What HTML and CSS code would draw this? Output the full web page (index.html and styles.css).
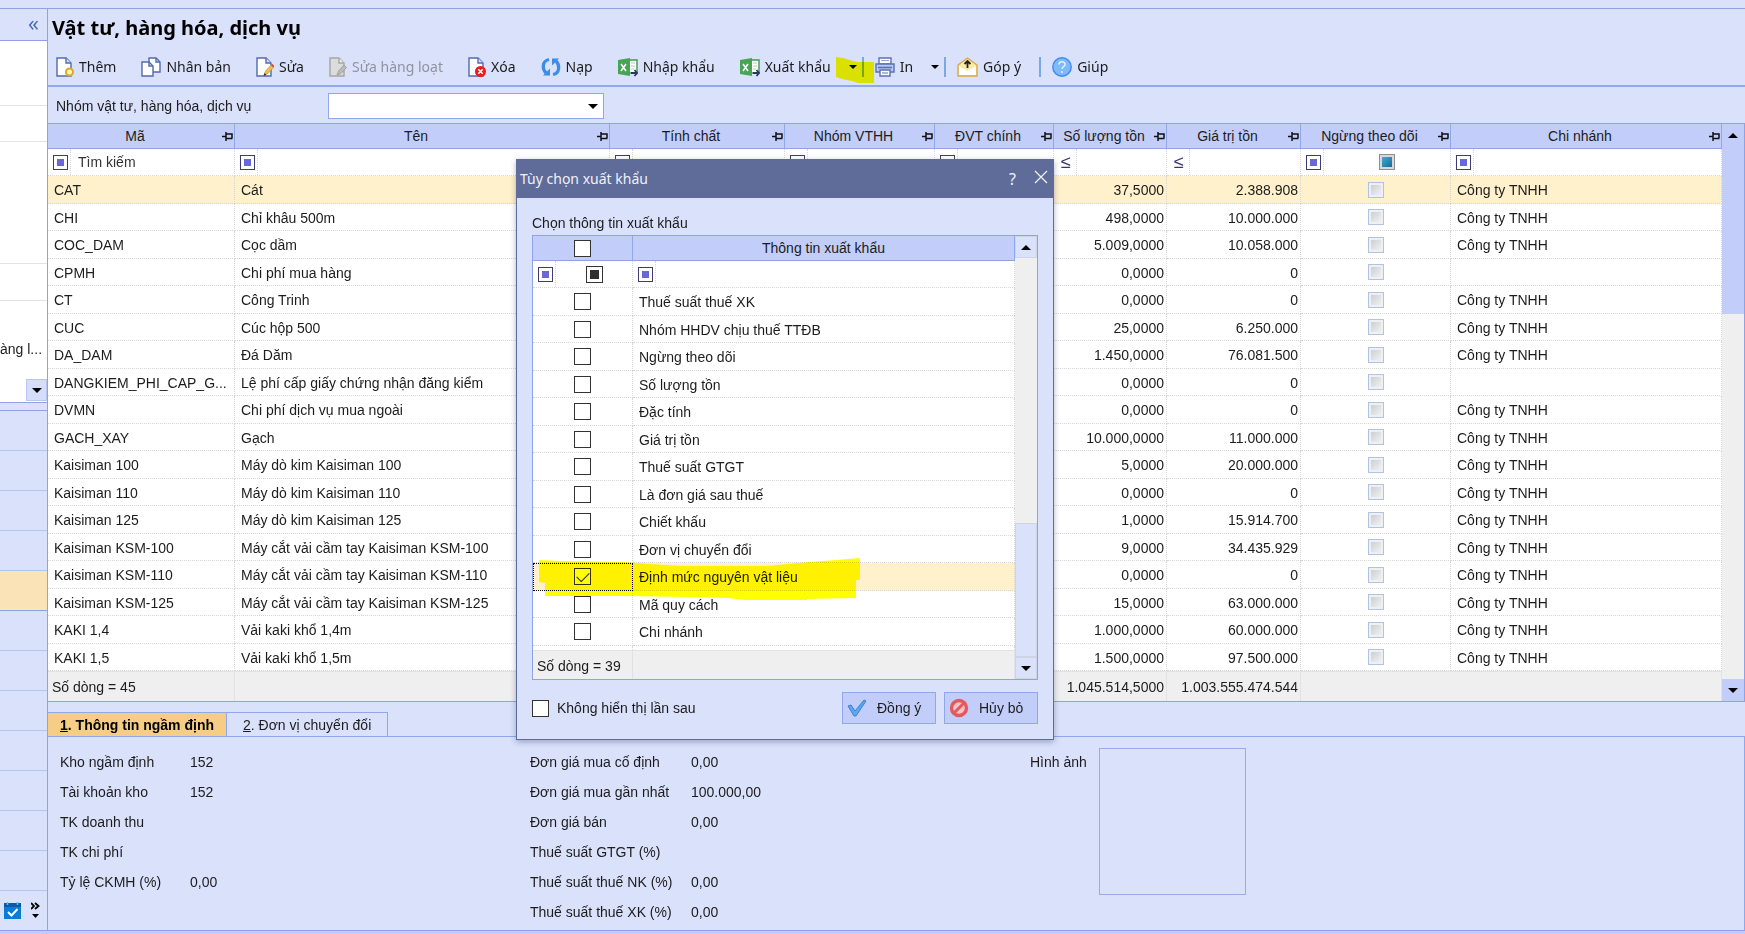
FILE: index.html
```html
<!DOCTYPE html>
<html lang="vi">
<head>
  <meta charset="UTF-8" />
  <meta name="viewport" content="width=device-width, initial-scale=1.0"/>
  <title>Vật tư, hàng hóa, dịch vụ</title>
  <link rel="stylesheet" href="styles.css">
</head>
<body>

  <!-- shared icon shapes -->
  <svg class="defs" width="0" height="0" aria-hidden="true">
    <symbol id="page" viewBox="0 0 18 20"><path d="M1 1h9l5 5v13H1z" fill="#fff" stroke="#5269ae" stroke-width="1.4"/><path d="M10 1v5h5" fill="#d9e0fa" stroke="#5269ae" stroke-width="1.4"/></symbol>
    <symbol id="excel" viewBox="0 0 20 20"><path d="M11 3h8v13h-8z" fill="#fff" stroke="#3f9a4e" stroke-width="1.4"/><path d="M13 6h4M13 9h4M13 12h3" stroke="#a9d3b0"/><path d="M0 3l12-2v18L0 17z" fill="#46a455"/><path d="M3 7l5 7M8 7l-5 7" stroke="#fff" stroke-width="1.6"/><path d="M13 16h6M16.500 13l2.500 3-2.500 3" fill="none" stroke="#28395e" stroke-width="1.8"/></symbol>
    <symbol id="pin" viewBox="0 0 11 9"><path d="M0 4.500h4M4 0v9M4 2h6v4M4 6.500h6.500" fill="none" stroke="#111" stroke-width="1.500"/></symbol>
  </svg>

  <div class="app">
    <aside class="sidebar">
      <div class="side-head"><button class="collapse" aria-label="Thu gọn">«</button></div>
      <div class="side-tree">
        <div class="tree-row first"></div>
        <div class="tree-row second"></div>
        <div class="tree-row third"></div>
        <div class="tree-row fourth"></div>
        <div class="tree-label">àng l...</div>
        <button class="side-down" aria-label="Xuống"><i class="down"></i></button>
      </div>
      <div class="side-split"></div>
      <div class="side-nav">
        <div class="nav-item"></div>
        <div class="nav-item"></div>
        <div class="nav-item"></div>
        <div class="nav-item"></div>
        <div class="nav-item active"></div>
        <div class="nav-item"></div>
        <div class="nav-item"></div>
        <div class="nav-item"></div>
        <div class="nav-item"></div>
        <div class="nav-item"></div>
        <div class="nav-item"></div>
        <div class="nav-item"></div>
      </div>
      <div class="side-foot">
        <svg width="17" height="17" viewBox="0 0 17 17"><path d="M0 1h17v16H0z" fill="#0a7bd6"/><path d="M0 1h17v4H0z" fill="#0b5aa6"/><path d="M3.500 0v3M13.500 0v3" stroke="#53c6f5" stroke-width="1.500"/><path d="M4 10l3.500 3.500L13.500 7" fill="none" stroke="#fff" stroke-width="2"/></svg>
        <svg width="9" height="17" viewBox="0 0 9 17"><path d="M0 1l3 3-3 3M4 1l3.500 3L4 7" fill="none" stroke="#000" stroke-width="1.800"/><path d="M1 12h7l-3.500 4z"/></svg>
      </div>
    </aside>

    <main class="content">
      <h1>Vật tư, hàng hóa, dịch vụ</h1>

      <div class="toolbar">
        <button><svg width="18" height="20" viewBox="0 0 18 20"><use href="#page" width="18" height="20"/><circle cx="13.500" cy="15" r="3.500" fill="#fff3b5" stroke="#d9a92c" stroke-width="2"/></svg>Thêm</button>
        <button><svg width="20" height="20" viewBox="0 0 20 20"><path d="M8 1h7l4 4v10H8z" fill="#fff" stroke="#5269ae" stroke-width="1.400"/><path d="M15 1v4h4" fill="none" stroke="#5269ae" stroke-width="1.400"/><path d="M1 5h7l4 4v10H1z" fill="#fff" stroke="#5269ae" stroke-width="1.400"/><path d="M8 5v4h4" fill="none" stroke="#5269ae" stroke-width="1.400"/></svg>Nhân bản</button>
        <button><svg width="18" height="20" viewBox="0 0 18 20"><use href="#page" width="18" height="20"/><path d="M8 18l1.500-4 5.500-6 2.500 2.500-5.500 6z" fill="#e9bd52" stroke="#b78a2c" stroke-width=".6"/><path d="M15 8l1.500-1 2 2-1 1.500z" fill="#d8443a"/><path d="M7.500 19l1-3 2 2z" fill="#333"/></svg>Sửa</button>
        <button disabled><svg width="18" height="20" viewBox="0 0 18 20"><path d="M1 1h9l5 5v13H1z" fill="#dcdcdc" stroke="#a5a5a5" stroke-width="1.400"/><path d="M10 1v5h5" fill="#eee" stroke="#a5a5a5" stroke-width="1.400"/><path d="M8 18l1.500-4 5.500-6 2.500 2.500-5.500 6z" fill="#bbb" stroke="#999" stroke-width=".8"/></svg>Sửa hàng loạt</button>
        <button><svg width="18" height="20" viewBox="0 0 18 20"><use href="#page" width="18" height="20"/><circle cx="12.500" cy="14.500" r="5.500" fill="#f01818"/><path d="M10.300 12.300l4.400 4.400M14.700 12.300l-4.400 4.400" stroke="#fff" stroke-width="1.600"/></svg>Xóa</button>
        <button><svg width="20" height="20" viewBox="0 0 20 20"><path d="M8 2.500C1 4 1 12 5 16" fill="none" stroke="#3c8ce8" stroke-width="3.200"/><path d="M2 18.500h7v-7z" fill="#3c8ce8"/><path d="M12 17.500c7-1.500 7-9.500 3-13.500" fill="none" stroke="#3c8ce8" stroke-width="3.200"/><path d="M18 1.500h-7v7z" fill="#3c8ce8"/></svg>Nạp</button>
        <button><svg width="20" height="20"><use href="#excel"/></svg>Nhập khẩu</button>
        <button><svg width="20" height="20"><use href="#excel"/></svg>Xuất khẩu</button>
        <button class="split" aria-label="Tùy chọn xuất khẩu"><i class="down"></i>
          <svg class="mark" width="38" height="26" viewBox="0 0 38 26"><path d="M0 0l7 1 10 3 6 1h15v21H22l-6-2-10-2-6-2z" fill="#ff0"/></svg>
        </button>
        <button class="print"><svg width="20" height="20" viewBox="0 0 20 20"><path d="M4 1h12v6H4z" fill="#fff" stroke="#5872b4" stroke-width="1.400"/><path d="M6 3.500h8" stroke="#93a6d4"/><path d="M1 7h18v8H1z" fill="#b9c8ef" stroke="#5872b4" stroke-width="1.400"/><path d="M3 10.500h14" stroke="#5872b4" stroke-width="1.600"/><path d="M5 13h10v6H5z" fill="#fff" stroke="#5872b4" stroke-width="1.400"/><path d="M7 16h6" stroke="#5872b4"/></svg>In</button>
        <button class="split" aria-label="Tùy chọn in"><i class="down"></i></button>
        <button class="feedback"><svg width="21" height="20" viewBox="0 0 21 20"><path d="M1 8l9.500-7L20 8v11H1z" fill="#fbe9a8" stroke="#d8a849" stroke-width="1.400"/><path d="M2 9l8.500 5L19 9v9H2z" fill="#fff"/><path d="M10.500 11V5M7.500 7l3-3 3 3" fill="none" stroke="#222" stroke-width="1.800"/></svg>Góp ý</button>
        <span class="bar"></span>
        <button class="help"><svg width="20" height="20" viewBox="0 0 20 20"><circle cx="10" cy="10" r="9.200" fill="#7db9fb" stroke="#3d8cec" stroke-width="1.400"/><path d="M7 7.500c0-4 6-3.500 6 0 0 2.200-3 2.200-3 4.500M10 14v2" fill="none" stroke="#e3f1ff" stroke-width="1.500"/></svg>Giúp</button>
      </div>

      <div class="group-row">
        <label for="group">Nhóm vật tư, hàng hóa, dịch vụ</label>
        <div class="combo"><select id="group"><option></option></select><i class="down"></i></div>
      </div>

      <div class="grid">
        <table class="items">
          <colgroup>
            <col class="c-code"><col class="c-name"><col class="c-kind"><col class="c-group"><col class="c-unit"><col class="c-qty"><col class="c-value"><col class="c-stop"><col>
          </colgroup>
          <thead>
            <tr>
              <th>Mã<svg class="pin"><use href="#pin"/></svg></th>
              <th>Tên<svg class="pin"><use href="#pin"/></svg></th>
              <th>Tính chất<svg class="pin"><use href="#pin"/></svg></th>
              <th>Nhóm VTHH<svg class="pin"><use href="#pin"/></svg></th>
              <th>ĐVT chính<svg class="pin"><use href="#pin"/></svg></th>
              <th>Số lượng tồn<svg class="pin"><use href="#pin"/></svg></th>
              <th>Giá trị tồn<svg class="pin"><use href="#pin"/></svg></th>
              <th>Ngừng theo dõi<svg class="pin"><use href="#pin"/></svg></th>
              <th>Chi nhánh<svg class="pin"><use href="#pin"/></svg></th>
            </tr>
            <tr class="filter">
              <td><div><span class="op"><i></i></span><input type="text" aria-label="Tìm theo mã" placeholder="Tìm kiếm"></div></td>
              <td><div><span class="op"><i></i></span><input type="text" aria-label="Tìm theo tên"></div></td>
              <td><div><span class="op"><i></i></span></div></td>
              <td><div><span class="op"><i></i></span></div></td>
              <td><div><span class="op"><i></i></span></div></td>
              <td><div><span class="op le">≤</span><input type="text" aria-label="Số lượng tồn"></div></td>
              <td><div><span class="op le">≤</span><input type="text" aria-label="Giá trị tồn"></div></td>
              <td><div><span class="op"><i></i></span><span class="mid"><input type="checkbox" class="old mixed" aria-label="Ngừng theo dõi"></span></div></td>
              <td><div><span class="op"><i></i></span><input type="text" aria-label="Chi nhánh"></div></td>
            </tr>
          </thead>
          <tbody>
            <tr class="selected"><td>CAT</td><td>Cát</td><td></td><td></td><td></td><td>37,5000</td><td>2.388.908</td><td><input type="checkbox" class="old" aria-label="Ngừng CAT"></td><td>Công ty TNHH</td></tr>
            <tr><td>CHI</td><td>Chỉ khâu 500m</td><td></td><td></td><td></td><td>498,0000</td><td>10.000.000</td><td><input type="checkbox" class="old" aria-label="Ngừng CHI"></td><td>Công ty TNHH</td></tr>
            <tr><td>COC_DAM</td><td>Cọc dầm</td><td></td><td></td><td></td><td>5.009,0000</td><td>10.058.000</td><td><input type="checkbox" class="old" aria-label="Ngừng COC_DAM"></td><td>Công ty TNHH</td></tr>
            <tr><td>CPMH</td><td>Chi phí mua hàng</td><td></td><td></td><td></td><td>0,0000</td><td>0</td><td><input type="checkbox" class="old" aria-label="Ngừng CPMH"></td><td></td></tr>
            <tr><td>CT</td><td>Công Trinh</td><td></td><td></td><td></td><td>0,0000</td><td>0</td><td><input type="checkbox" class="old" aria-label="Ngừng CT"></td><td>Công ty TNHH</td></tr>
            <tr><td>CUC</td><td>Cúc hộp 500</td><td></td><td></td><td></td><td>25,0000</td><td>6.250.000</td><td><input type="checkbox" class="old" aria-label="Ngừng CUC"></td><td>Công ty TNHH</td></tr>
            <tr><td>DA_DAM</td><td>Đá Dăm</td><td></td><td></td><td></td><td>1.450,0000</td><td>76.081.500</td><td><input type="checkbox" class="old" aria-label="Ngừng DA_DAM"></td><td>Công ty TNHH</td></tr>
            <tr><td>DANGKIEM_PHI_CAP_G...</td><td>Lệ phí cấp giấy chứng nhận đăng kiểm</td><td></td><td></td><td></td><td>0,0000</td><td>0</td><td><input type="checkbox" class="old" aria-label="Ngừng DANGKIEM"></td><td></td></tr>
            <tr><td>DVMN</td><td>Chi phí dịch vụ mua ngoài</td><td></td><td></td><td></td><td>0,0000</td><td>0</td><td><input type="checkbox" class="old" aria-label="Ngừng DVMN"></td><td>Công ty TNHH</td></tr>
            <tr><td>GACH_XAY</td><td>Gạch</td><td></td><td></td><td></td><td>10.000,0000</td><td>11.000.000</td><td><input type="checkbox" class="old" aria-label="Ngừng GACH_XAY"></td><td>Công ty TNHH</td></tr>
            <tr><td>Kaisiman 100</td><td>Máy dò kim Kaisiman 100</td><td></td><td></td><td></td><td>5,0000</td><td>20.000.000</td><td><input type="checkbox" class="old" aria-label="Ngừng Kaisiman 100"></td><td>Công ty TNHH</td></tr>
            <tr><td>Kaisiman 110</td><td>Máy dò kim Kaisiman 110</td><td></td><td></td><td></td><td>0,0000</td><td>0</td><td><input type="checkbox" class="old" aria-label="Ngừng Kaisiman 110"></td><td>Công ty TNHH</td></tr>
            <tr><td>Kaisiman 125</td><td>Máy dò kim Kaisiman 125</td><td></td><td></td><td></td><td>1,0000</td><td>15.914.700</td><td><input type="checkbox" class="old" aria-label="Ngừng Kaisiman 125"></td><td>Công ty TNHH</td></tr>
            <tr><td>Kaisiman KSM-100</td><td>Máy cắt vải cầm tay Kaisiman KSM-100</td><td></td><td></td><td></td><td>9,0000</td><td>34.435.929</td><td><input type="checkbox" class="old" aria-label="Ngừng KSM-100"></td><td>Công ty TNHH</td></tr>
            <tr><td>Kaisiman KSM-110</td><td>Máy cắt vải cầm tay Kaisiman KSM-110</td><td></td><td></td><td></td><td>0,0000</td><td>0</td><td><input type="checkbox" class="old" aria-label="Ngừng KSM-110"></td><td>Công ty TNHH</td></tr>
            <tr><td>Kaisiman KSM-125</td><td>Máy cắt vải cầm tay Kaisiman KSM-125</td><td></td><td></td><td></td><td>15,0000</td><td>63.000.000</td><td><input type="checkbox" class="old" aria-label="Ngừng KSM-125"></td><td>Công ty TNHH</td></tr>
            <tr><td>KAKI 1,4</td><td>Vải kaki khổ 1,4m</td><td></td><td></td><td></td><td>1.000,0000</td><td>60.000.000</td><td><input type="checkbox" class="old" aria-label="Ngừng KAKI 1,4"></td><td>Công ty TNHH</td></tr>
            <tr><td>KAKI 1,5</td><td>Vải kaki khổ 1,5m</td><td></td><td></td><td></td><td>1.500,0000</td><td>97.500.000</td><td><input type="checkbox" class="old" aria-label="Ngừng KAKI 1,5"></td><td>Công ty TNHH</td></tr>
          </tbody>
          <tfoot>
            <tr><td>Số dòng = 45</td><td></td><td></td><td></td><td></td><td>1.045.514,5000</td><td>1.003.555.474.544</td><td colspan="2"></td></tr>
          </tfoot>
        </table>
        <div class="scroll">
          <button aria-label="Lên"><i class="up"></i></button>
          <div class="thumb"></div>
          <div class="track"></div>
          <button aria-label="Xuống"><i class="down"></i></button>
        </div>
      </div>

      <div class="tabs">
        <button class="tab active"><u>1</u>. Thông tin ngầm định</button>
        <button class="tab"><u>2</u>. Đơn vị chuyển đổi</button>
      </div>

      <div class="panel">
        <dl class="col-a">
          <dt>Kho ngầm định</dt><dd>152</dd>
          <dt>Tài khoản kho</dt><dd>152</dd>
          <dt>TK doanh thu</dt><dd></dd>
          <dt>TK chi phí</dt><dd></dd>
          <dt>Tỷ lệ CKMH (%)</dt><dd>0,00</dd>
        </dl>
        <dl class="col-b">
          <dt>Đơn giá mua cố định</dt><dd>0,00</dd>
          <dt>Đơn giá mua gần nhất</dt><dd>100.000,00</dd>
          <dt>Đơn giá bán</dt><dd>0,00</dd>
          <dt>Thuế suất GTGT (%)</dt><dd></dd>
          <dt>Thuế suất thuế NK (%)</dt><dd>0,00</dd>
          <dt>Thuế suất thuế XK (%)</dt><dd>0,00</dd>
        </dl>
        <div class="picture"><span>Hình ảnh</span><div class="frame"></div></div>
      </div>
    </main>
  </div>

  <div class="dialog" role="dialog" aria-labelledby="dialog-title">
    <div class="dialog-head">
      <span id="dialog-title">Tùy chọn xuất khẩu</span>
      <button aria-label="Trợ giúp">?</button>
      <button aria-label="Đóng"><svg width="14" height="14" viewBox="0 0 14 14"><path d="M1 1l12 12M13 1L1 13" stroke="#eef0fa" stroke-width="1.300"/></svg></button>
    </div>
    <div class="dialog-body">
      <div class="dialog-label">Chọn thông tin xuất khẩu</div>
      <div class="export">
        <table class="fields">
          <colgroup><col class="c-check"><col></colgroup>
          <thead>
            <tr><th><input type="checkbox" aria-label="Chọn tất cả"></th><th>Thông tin xuất khẩu</th></tr>
            <tr class="filter">
              <td><div><span class="op"><i></i></span><span class="mid"><input type="checkbox" class="mixed" aria-label="Lọc đã chọn"></span></div></td>
              <td><div><span class="op"><i></i></span><input type="text" aria-label="Lọc thông tin"></div></td>
            </tr>
          </thead>
          <tbody>
            <tr><td><input type="checkbox" id="f1"></td><td><label for="f1">Thuế suất thuế XK</label></td></tr>
            <tr><td><input type="checkbox" id="f2"></td><td><label for="f2">Nhóm HHDV chịu thuế TTĐB</label></td></tr>
            <tr><td><input type="checkbox" id="f3"></td><td><label for="f3">Ngừng theo dõi</label></td></tr>
            <tr><td><input type="checkbox" id="f4"></td><td><label for="f4">Số lượng tồn</label></td></tr>
            <tr><td><input type="checkbox" id="f5"></td><td><label for="f5">Đặc tính</label></td></tr>
            <tr><td><input type="checkbox" id="f6"></td><td><label for="f6">Giá trị tồn</label></td></tr>
            <tr><td><input type="checkbox" id="f7"></td><td><label for="f7">Thuế suất GTGT</label></td></tr>
            <tr><td><input type="checkbox" id="f8"></td><td><label for="f8">Là đơn giá sau thuế</label></td></tr>
            <tr><td><input type="checkbox" id="f9"></td><td><label for="f9">Chiết khấu</label></td></tr>
            <tr><td><input type="checkbox" id="f10"></td><td><label for="f10">Đơn vị chuyển đổi</label></td></tr>
            <tr class="selected"><td class="focus"><input type="checkbox" id="f11" checked></td><td><label for="f11">Định mức nguyên vật liệu</label></td></tr>
            <tr><td><input type="checkbox" id="f12"></td><td><label for="f12">Mã quy cách</label></td></tr>
            <tr><td><input type="checkbox" id="f13"></td><td><label for="f13">Chi nhánh</label></td></tr>
            <tr class="filler"><td></td><td></td></tr>
          </tbody>
          <tfoot><tr><td>Số dòng = 39</td><td></td></tr></tfoot>
        </table>
        <div class="scroll light">
          <button aria-label="Lên"><i class="up"></i></button>
          <div class="track"></div>
          <div class="thumb"></div>
          <button aria-label="Xuống"><i class="down"></i></button>
        </div>
        <svg class="mark row-mark" width="322" height="42" viewBox="0 0 322 42"><path d="M0 2l21 1 64 1 26 2 31 2h86l42-4 28-2 23-2v22h-4v18l-49 1v1h-62l-17-2-41-1-64-1H6V25l-6-1z" fill="#ff0"/></svg>
      </div>
      <div class="dialog-foot">
        <input type="checkbox" id="hide-next"><label for="hide-next">Không hiển thị lần sau</label>
        <button><svg width="20" height="20" viewBox="0 0 20 20"><path d="M1 8l3-1 4 6L17 2l2 1L9 18H7z" fill="#5aa7f2" stroke="#3b82d4" stroke-width="1"/></svg>Đồng ý</button>
        <button><svg width="20" height="20" viewBox="0 0 20 20"><circle cx="10" cy="10" r="7.500" fill="#f6c4c8" stroke="#e25a5e" stroke-width="3.400"/><path d="M5 15L15 5" stroke="#e25a5e" stroke-width="3"/></svg>Hủy bỏ</button>
      </div>
    </div>
  </div>

</body>
</html>
```
FILE: styles.css
```css
* {
  box-sizing: border-box;
}

body {
  margin: 0;
  font: 14px/20px "Liberation Sans", Arial, sans-serif;
  color: #1c1c1c;
  background-color: #dae1fb;
}

.defs {
  position: absolute;
}

button {
  font: inherit;
  color: inherit;
  padding: 0;
  border: none;
  background: none;
}

.app {
  display: flex;
  min-height: 100vh;
  padding-top: 8px;
  border-bottom: 3px solid #c2cef9;
}

/* small arrows */
.down,
.up {
  display: block;
  width: 0;
  height: 0;
  border: 5px solid transparent;
  border-bottom: none;
  border-top-color: #000;
}

.up {
  border: 5px solid transparent;
  border-top: none;
  border-bottom-color: #000;
}

/* sidebar */
.sidebar {
  display: flex;
  flex-direction: column;
  width: 47px;
  flex: none;
  border-top: 1px solid #8fa3e3;
  border-bottom: 1px solid #8fa3e3;
}

.side-head {
  height: 32px;
  border-bottom: 1px solid #8fa3e3;
  text-align: right;
}

.collapse {
  padding-right: 8px;
  font: 22px/26px "Open Sans", sans-serif;
  color: #4469b0;
}

.side-tree {
  position: relative;
  height: 362px;
  background-color: #fff;
  border-bottom: 1px solid #8fa3e3;
  overflow: hidden;
}

.tree-row {
  border-bottom: 1px solid #e4e4e4;
}

.first { height: 65px; }
.second { height: 36px; }
.third { height: 122px; }
.fourth { height: 37px; }

.tree-label {
  margin-top: 38px;
  white-space: nowrap;
}

.side-down {
  position: absolute;
  right: 0;
  bottom: 1px;
  display: grid;
  place-items: center;
  width: 21px;
  height: 22px;
  background-color: #d5ddfa;
  border: 1px solid #b9c6f2;
}

.side-split {
  height: 8px;
  border-bottom: 1px solid #8fa3e3;
}

.nav-item {
  height: 40px;
  border-bottom: 1px solid #b5c3f0;
}

.nav-item.active {
  background-color: #fbe3b8;
  border-color: #8fa3e3;
}

.side-foot {
  display: flex;
  gap: 10px;
  padding: 11px 0 0 4px;
}

/* main area */
.content {
  flex: 1;
  min-width: 0;
  display: flex;
  flex-direction: column;
  border: 1px solid #8fa3e3;
  border-right: none;
}

h1 {
  margin: 0;
  padding: 4px 0 0 4px;
  font: bold 20px/30px "Noto Sans", sans-serif;
  color: #000;
}

.toolbar {
  display: flex;
  align-items: center;
  gap: 25px;
  height: 44px;
  padding: 6px 0 0 8px;
  border-bottom: 2px solid #8fa8ea;
  font: 14px/20px "Noto Sans", sans-serif;
}

.toolbar button {
  display: flex;
  align-items: center;
  gap: 5px;
  white-space: nowrap;
}

.toolbar button:disabled {
  color: #8f939f;
}

.toolbar .split {
  position: relative;
  justify-content: flex-end;
  width: 16px;
  height: 20px;
  margin-left: -8px;
  padding-right: 5px;
  border-right: 2px solid #79a8e2;
}

.toolbar .down {
  border-width: 4px 4px 0;
}

.toolbar .print,
.toolbar .feedback,
.toolbar .help {
  margin-left: -14px;
}

.bar {
  width: 2px;
  height: 20px;
  margin-left: -7px;
  background-color: #79a8e2;
}

.mark {
  position: absolute;
  left: -12px;
  top: 0;
  mix-blend-mode: multiply;
  pointer-events: none;
}

.group-row {
  display: flex;
  align-items: center;
  height: 36px;
  padding: 2px 0 0 8px;
}

.group-row label {
  width: 272px;
}

.combo {
  position: relative;
  width: 276px;
}

.combo select {
  display: block;
  width: 100%;
  height: 26px;
  appearance: none;
  background-color: #fff;
  border: 1px solid #8fa8ea;
  border-radius: 0;
}

.combo .down {
  position: absolute;
  right: 6px;
  top: 11px;
}

/* tables */
.grid,
.export {
  display: flex;
  border: 1px solid #8fa3e3;
  border-left: none;
}

table {
  flex: 1;
  width: 0;
  table-layout: fixed;
  border-spacing: 0;
  background-color: #fff;
}

.c-code { width: 187px; }
.c-name { width: 375px; }
.c-kind { width: 175px; }
.c-group { width: 150px; }
.c-unit { width: 119px; }
.c-qty { width: 113px; }
.c-value { width: 134px; }
.c-stop { width: 150px; }
.c-check { width: 100px; }

th {
  position: relative;
  height: 25px;
  padding: 0 12px 0 0;
  font-weight: normal;
  background-color: #c2cef9;
  border-right: 1px solid #8fa8ea;
  border-bottom: 1px solid #8fa3e3;
  white-space: nowrap;
}

.pin {
  position: absolute;
  right: 1px;
  top: 8px;
  width: 11px;
  height: 9px;
}

td {
  height: 27px;
  padding: 1px 2px 0 6px;
  border-right: 1px dotted #d6d6d6;
  border-bottom: 1px dotted #d6d6d6;
  white-space: nowrap;
  overflow: hidden;
}

tbody tr:nth-child(odd) td {
  height: 28px;
}

.items tbody td:nth-child(6),
.items tbody td:nth-child(7),
.items tfoot td:nth-child(6),
.items tfoot td:nth-child(7) {
  text-align: right;
}

.items tbody td:nth-child(8),
.fields tbody td:first-child {
  padding: 0;
}

.selected td {
  background-color: #fff1cb;
}

.filter td {
  padding: 0;
}

.filter td > div {
  display: flex;
  height: 26px;
}

.op {
  display: flex;
  align-items: center;
  flex: none;
  width: 23px;
  padding-left: 5px;
  border-right: 1px dotted #d6d6d6;
}

.op i {
  width: 15px;
  height: 15px;
  border: 1px solid #3f3a70;
  background-color: #6a69d3;
  box-shadow: inset 0 0 0 3px #fff;
}

.le {
  padding-left: 7px;
  font-size: 18px;
  color: #3a3570;
}

.filter input[type="text"] {
  flex: 1;
  min-width: 0;
  padding: 0 7px;
  border: none;
  background: none;
  font: inherit;
}

.filter input::placeholder {
  color: #333;
  opacity: 1;
}

.mid {
  flex: 1;
  display: flex;
  align-items: center;
  justify-content: center;
}

tfoot td {
  height: 30px;
  padding-left: 4px;
  background-color: #efefef;
  border: 1px solid #e2e2e2;
  border-width: 1px 1px 0 0;
}

/* check boxes */
input[type="checkbox"] {
  appearance: none;
  display: block;
  width: 17px;
  height: 17px;
  margin: 0 auto;
  background-color: #fff;
  border: 1px solid #333;
}

input[type="checkbox"].mixed {
  background-color: #2f2f2f;
  box-shadow: inset 0 0 0 3px #fff;
}

input[type="checkbox"].old {
  width: 16px;
  height: 16px;
  background: linear-gradient(135deg, #c4c8ce, #f7f7f7);
  border: 1px solid #b0c3e2;
  box-shadow: inset 0 0 0 2px #eef0f4;
}

input[type="checkbox"].old.mixed {
  background: linear-gradient(135deg, #49b8dd, #105f8c);
  border-color: #8f8f8f;
  box-shadow: inset 0 0 0 2px #d8d8d8;
}

input[type="checkbox"]:checked::after {
  content: "";
  display: block;
  width: 11px;
  height: 6px;
  margin: 3px 0 0 2px;
  border: solid #333;
  border-width: 0 0 1px 1px;
  transform: rotate(-45deg);
}

/* scroll bars */
.scroll {
  display: flex;
  flex-direction: column;
  width: 22px;
  background-color: #efefef;
}

.scroll button {
  display: grid;
  place-items: center;
  height: 22px;
  background-color: #c2cef9;
}

.scroll .thumb {
  height: 168px;
  background-color: #c2cef9;
}

.scroll .track {
  flex: 1;
}

.scroll.light button,
.scroll.light .thumb {
  background-color: #dae1fb;
  border: 1px solid #cfd4e4;
}

.scroll.light .thumb {
  height: 134px;
}

/* tabs and detail panel */
.tabs {
  display: flex;
  padding-top: 10px;
}

.tab {
  height: 24px;
  padding: 0 16px;
  border: 1px solid #8fa8ea;
  border-width: 1px 1px 0 0;
}

.tab.active {
  padding: 0 12px;
  font-weight: bold;
  color: #000;
  background-color: #f6cd85;
}

.panel {
  flex: 1;
  display: flex;
  padding: 10px 0 0 12px;
  border: 1px solid #8fa8ea;
  border-width: 1px 1px 0 0;
}

dl {
  display: grid;
  grid-auto-rows: 30px;
  align-content: start;
  align-items: center;
  margin: 0;
}

dd {
  margin: 0;
}

.col-a {
  width: 470px;
  grid-template-columns: 130px 1fr;
}

.col-b {
  width: 500px;
  grid-template-columns: 161px 1fr;
}

.picture {
  display: flex;
  gap: 12px;
  line-height: 30px;
}

.frame {
  width: 147px;
  height: 147px;
  margin-top: 1px;
  border: 1px solid #9aace6;
}

/* export dialog */
.dialog {
  position: absolute;
  left: 516px;
  top: 159px;
  width: 538px;
  background-color: #dae1fb;
  border: 1px solid #5f6b98;
  box-shadow: 0 2px 6px rgba(60, 70, 110, 0.4);
}

.dialog-head {
  display: flex;
  align-items: center;
  gap: 18px;
  height: 38px;
  padding: 0 5px 0 3px;
  color: #f0f2fb;
  background-color: #5f6b98;
  font: 14px/20px "Noto Sans", sans-serif;
}

.dialog-head span {
  flex: 1;
}

.dialog-head button:first-of-type {
  font-size: 16px;
}

.dialog-body {
  padding: 15px 15px 15px 15px;
}

.dialog-label {
  height: 22px;
}

.export {
  position: relative;
  border-left: 1px solid #8fa3e3;
}

.fields th {
  padding: 0;
}

.fields .focus {
  outline: 1px dotted #000;
  outline-offset: -1px;
}

.fields .filler td {
  height: 4px;
  padding: 0;
  border-bottom: none;
}

.fields tfoot td {
  height: 29px;
}

.row-mark {
  left: 6px;
  top: 322px;
}

.dialog-foot {
  display: flex;
  align-items: center;
  gap: 8px;
  margin-top: 12px;
}

.dialog-foot input[type="checkbox"] {
  margin: 0;
}

.dialog-foot label {
  flex: 1;
}

.dialog-foot button {
  display: flex;
  align-items: center;
  gap: 10px;
  width: 94px;
  height: 32px;
  padding-left: 4px;
  background-color: #c2cef9;
  border: 1px solid #8fa8ea;
}
```
